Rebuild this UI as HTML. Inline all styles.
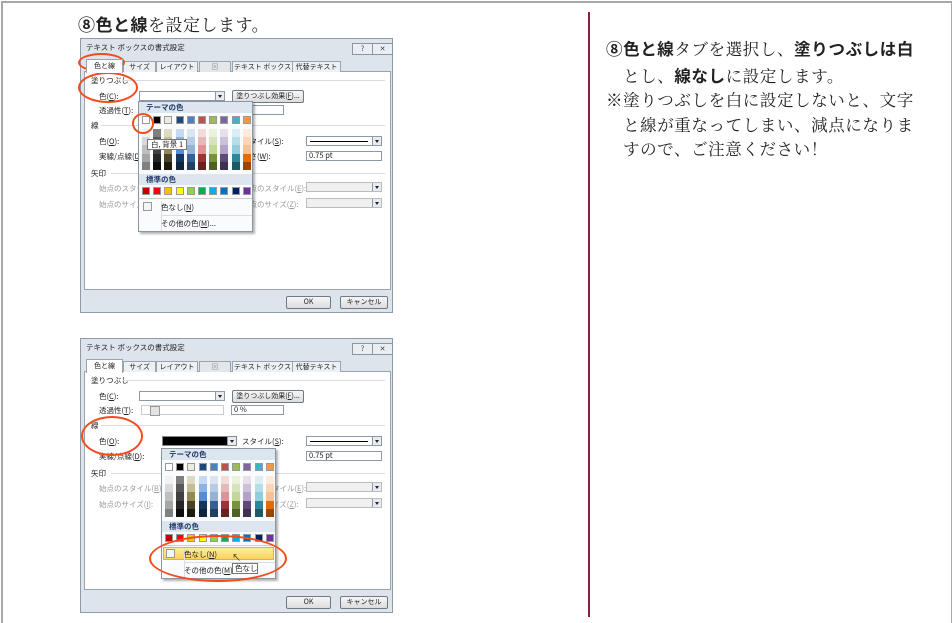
<!DOCTYPE html>
<html><head><meta charset="utf-8"><style>
body{margin:0;width:952px;height:617px;background:#fff;position:relative;overflow:hidden;font-family:"Liberation Sans","Noto Sans CJK JP",sans-serif}
.frame{position:absolute;left:1px;top:1px;width:948px;height:620px;border:2px solid #a8a8a8;border-bottom:none}
.vl{position:absolute;left:588px;top:12px;width:1.5px;height:605px;background:#8a2040}
.hd{position:absolute;left:78px;top:11px;font-size:17px;color:#222;font-family:"Liberation Serif","Noto Serif CJK SC",serif;letter-spacing:0.5px}
.hd b{font-family:"Noto Sans CJK JP",sans-serif;font-weight:700}
.rt{position:absolute;left:606px;top:36px;font-size:16.5px;line-height:24.5px;color:#222;font-family:"Liberation Serif","Noto Serif CJK SC",serif;letter-spacing:0.6px}
.rt b{font-family:"Noto Sans CJK JP",sans-serif;font-weight:700}
.rt .i{padding-left:17px}
.dlg{position:absolute;width:313px;height:275px;background:#dde4ec;border:1px solid #8f9aa6;box-sizing:border-box;font-size:7.5px;color:#222;font-family:"Noto Sans CJK JP",sans-serif}
.a{position:absolute;white-space:nowrap}
.tb{position:absolute;width:19px;height:10px;border:1px solid #8a96a4;background:#eaeef3;top:4px;font-size:7px;text-align:center;line-height:10px;color:#444}
.tab{position:absolute;top:22px;height:10px;border:1px solid #9aa4b0;border-bottom:none;background:#eef1f4;font-size:7px;text-align:center;line-height:10px}
.panel{position:absolute;left:3px;top:32px;width:305px;height:217px;background:#fff;border:1px solid #9aa4b0}
.hl{position:absolute;height:1px;background:#d8dde3}
.cb{position:absolute;height:10px;border:1px solid #8c99a8;background:#fff;box-sizing:border-box}
.cb .dd{position:absolute;right:0;top:0;width:8px;height:8px;background:#e8ecf0;border-left:1px solid #8c99a8}
.cb .dd:after{content:"";position:absolute;left:2px;top:3px;border:2px solid transparent;border-top:3px solid #222}
.btn{position:absolute;height:11px;border:1px solid #707a86;background:linear-gradient(#f6f6f6,#dcdcdc);border-radius:2px;text-align:center;line-height:11px;font-size:7px}
.g{color:#9a9a9a}
.pop{position:absolute;width:113px;background:#fafbfc;border:1px solid #8a96a4;box-shadow:2px 2px 2px rgba(0,0,0,.3)}
.ph{position:absolute;left:0;width:113px;height:11px;background:#dde5ef;color:#1f3a6a;font-weight:bold;font-size:7.5px;line-height:11px;padding-left:7px;box-sizing:border-box}
.sw{position:absolute;width:8px;height:8px;border:0.5px solid #999;box-sizing:border-box}
.ell{position:absolute;border:2.5px solid #f24c1c;border-radius:50%;box-sizing:border-box}
</style></head><body>
<div class="frame"></div>
<div class="vl"></div>
<div class="hd"><b>⑧色と線</b>を設定します。</div>
<div class="rt">
<div><b>⑧色と線</b>タブを選択し、<b>塗りつぶしは白</b></div>
<div class="i">とし、<b>線なし</b>に設定します。</div>
<div>※塗りつぶしを白に設定しないと、文字</div>
<div class="i">と線が重なってしまい、減点になりま</div>
<div class="i">すので、ご注意ください！</div>
</div>

<div class="dlg" id="d1" style="left:80px;top:38px"></div>
<div class="dlg" id="d2" style="left:80px;top:338px"></div>

<script>
var theme=["#ffffff","#000000","#eeece1","#1f497d","#4f81bd","#c0504d","#9bbb59","#8064a2","#4bacc6","#f79646"];
var sh=[["#f2f2f2","#d9d9d9","#bfbfbf","#a6a6a6","#808080"],["#7f7f7f","#595959","#404040","#262626","#0d0d0d"],["#ddd9c3","#c4bd97","#938953","#494429","#1d1b10"],["#c6d9f0","#8db3e2","#548dd4","#17365d","#0f243e"],["#dbe5f1","#b8cce4","#95b3d7","#366092","#244061"],["#f2dcdb","#e5b9b7","#d99694","#953734","#632423"],["#ebf1dd","#d7e3bc","#c3d69b","#76923c","#4f6128"],["#e5e0ec","#ccc1d9","#b2a2c7","#5f497a","#3f3151"],["#dbeef3","#b7dde8","#92cddc","#31859b","#205867"],["#fdeada","#fbd5b5","#fac08f","#e36c09","#974806"]];
var std=["#c00000","#ff0000","#ffc000","#ffff00","#92d050","#00b050","#00b0f0","#0070c0","#002060","#7030a0"];
function pop(x,y,hl){
 var h='<div class="pop" style="left:'+x+'px;top:'+y+'px;height:129px">';
 h+='<div class="ph" style="top:0">テーマの色</div>';
 for(var i=0;i<10;i++){var l=3+i*11.2;
  h+='<div class="sw" style="left:'+l+'px;top:14px;background:'+theme[i]+'"></div>';
  for(var j=0;j<5;j++)h+='<div class="sw" style="border:none;left:'+l+'px;top:'+(27+j*8.2)+'px;height:8.2px;background:'+sh[i][j]+'"></div>';
  h+='<div class="sw" style="left:'+l+'px;top:85px;background:'+std[i]+'"></div>';}
 h+='<div class="ph" style="top:72px">標準の色</div>';
 h+='<div class="a" style="left:0;top:96px;width:113px;height:1px;background:#ccc"></div>';
 if(hl)h+='<div class="a" style="left:1px;top:98px;width:111px;height:13px;background:linear-gradient(#fdeba0,#f8d45c);border:1px solid #e2b040;box-sizing:border-box"></div>';
 h+='<div class="sw" style="left:4px;top:100px;width:9px;height:9px;background:#f5f5f5"></div>';
 h+='<div class="a" style="left:22px;top:99px;width:1px;height:30px;background:#ddd"></div>';
 h+='<div class="a" style="left:22px;top:113px;width:91px;height:1px;background:#ddd"></div>';
 h+='<div class="a" style="left:22px;top:100px">色なし(<u>N</u>)</div>';
 h+='<div class="a" style="left:22px;top:116px">その他の色(<u>M</u>)...</div>';
 return h+'</div>';}
function dlg(id,two){
 var h='<div class="a" style="left:5px;top:3px;font-size:7.5px">テキスト ボックスの書式設定</div>';
 h+='<div class="tb" style="left:271px">?</div><div class="tb" style="left:291px">✕</div>';
 h+='<div class="panel"></div>';
 var tabs=[[42,31,"サイズ"],[75,40,"レイアウト"],[118,30,"⊠"],[151,59,"テキスト ボックス"],[211,47,"代替テキスト"]];
 tabs.forEach(function(t){h+='<div class="tab" style="left:'+t[0]+'px;width:'+t[1]+'px'+(t[2]=="⊠"?';color:#999;background:#e3e6ea':'')+'">'+t[2]+'</div>';});
 h+='<div class="tab" style="left:5px;top:20px;height:13px;width:35px;background:#fff;z-index:2;line-height:12px">色と線</div>';
 h+='<div class="a" style="left:10px;top:36px">塗りつぶし</div><div class="hl" style="left:42px;top:41px;width:262px"></div>';
 h+='<div class="a" style="left:18px;top:52px">色(<u>C</u>):</div>';
 h+='<div class="cb" style="left:58px;top:52px;width:86px"><div class="dd"></div></div>';
 h+='<div class="btn" style="left:151px;top:51px;width:70px">塗りつぶし効果(<u>F</u>)...</div>';
 h+='<div class="a" style="left:18px;top:66px">透過性(<u>T</u>):</div>';
 if(two){h+='<div class="cb" style="left:60px;top:66px;width:83px;border-color:#ccc"><div class="a" style="left:8px;top:0;width:8px;height:8px;background:#e4e4e4;border:1px solid #999"></div></div>';}
 h+='<div class="cb" style="left:150px;top:66px;width:53px;padding-left:2px;line-height:8px">'+(two?'0 %':'')+'</div>';
 h+='<div class="a" style="left:10px;top:81px">線</div><div class="hl" style="left:20px;top:86px;width:284px"></div>';
 h+='<div class="a" style="left:18px;top:97px">色(<u>O</u>):</div>';
 if(two)h+='<div class="cb" style="left:81px;top:97px;width:75px;background:#000;border:1px solid #888"><div class="dd"></div></div>';
 h+='<div class="a" style="left:161px;top:97px">スタイル(<u>S</u>):</div>';
 h+='<div class="cb" style="left:225px;top:97px;width:76px"><div class="a" style="left:3px;top:4px;width:58px;height:1px;background:#000"></div><div class="dd"></div></div>';
 h+='<div class="a" style="left:18px;top:112px">実線/点線(<u>D</u>):</div>';
 h+='<div class="a" style="left:161px;top:112px">太さ(<u>W</u>):</div>';
 h+='<div class="cb" style="left:225px;top:112px;width:76px;padding-left:2px;line-height:8px">0.75 pt</div>';
 h+='<div class="a" style="left:10px;top:129px">矢印</div><div class="hl" style="left:30px;top:134px;width:274px"></div>';
 h+='<div class="a g" style="left:18px;top:144px">始点のスタイル(<u>B</u>):</div><div class="a g" style="left:161px;top:144px">終点のスタイル(<u>E</u>):</div>';
 h+='<div class="cb" style="left:225px;top:143px;width:76px;background:#f0f0f0;border-color:#bbb"><div class="dd"></div></div>';
 h+='<div class="a g" style="left:18px;top:160px">始点のサイズ(<u>I</u>):</div><div class="a g" style="left:161px;top:160px">終点のサイズ(<u>Z</u>):</div>';
 h+='<div class="cb" style="left:225px;top:159px;width:76px;background:#f0f0f0;border-color:#bbb"><div class="dd"></div></div>';
 h+='<div class="btn" style="left:205px;top:257px;width:43px">OK</div><div class="btn" style="left:259px;top:257px;width:46px">キャンセル</div>';
 if(!two){
  h+=pop(57,62,false);
  h+='<div class="a" style="left:66px;top:100px;width:40px;height:11px;background:#fff;border:1px solid #777;line-height:10px;padding-left:3px;box-sizing:border-box">白, 背景 1</div>';
  h+='<div class="ell" style="left:-3px;top:14px;width:47px;height:19px"></div>';
  h+='<div class="ell" style="left:-3px;top:33px;width:60px;height:31px"></div>';
  h+='<div class="ell" style="left:51px;top:74px;width:22px;height:21px"></div>';
 }else{
  h+=pop(80,109,true);
  h+='<div class="a" style="left:151px;top:224px;width:26px;height:11px;background:#fff;border:1px solid #777;line-height:10px;padding-left:2px;box-sizing:border-box">色なし</div>';
  h+='<div class="a" style="left:151px;top:212px;font-size:9px">↖</div>';
  h+='<div class="ell" style="left:0px;top:77px;width:62px;height:40px"></div>';
  h+='<div class="ell" style="left:68px;top:196px;width:138px;height:47px"></div>';
 }
 document.getElementById(id).innerHTML=h;}
dlg("d1",false);dlg("d2",true);
</script>
</body></html>
